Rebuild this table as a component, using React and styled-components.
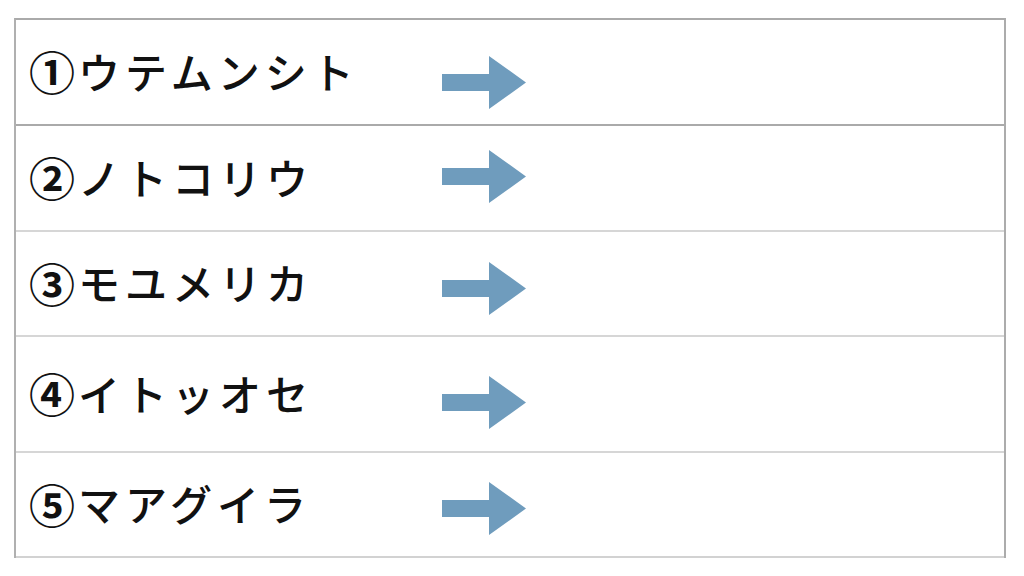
import React from 'react';
import styled, { createGlobalStyle } from 'styled-components';

const GlobalStyle = createGlobalStyle`
  html, body {
    margin: 0;
    padding: 0;
    background: #ffffff;
  }
`;

const rows = [
  { num: '①', label: 'ウテムンシト', height: 106, shift: 10, strong: true },
  { num: '②', label: 'ノトコリウ', height: 106, shift: -2 },
  { num: '③', label: 'モユメリカ', height: 105, shift: 5 },
  { num: '④', label: 'イトッオセ', height: 116, shift: 8 },
  { num: '⑤', label: 'マアグイラ', height: 105, shift: 4 },
];

function Arrow() {
  return (
    <svg width="84" height="53" viewBox="0 0 84 53">
      <polygon points="0,18 47,18 47,0 84,26.5 47,53 47,35 0,35" fill="#6f9cbd" />
    </svg>
  );
}

function App() {
  return (
    <>
      <GlobalStyle />
      <Page>
        <Table>
          {rows.map((row, index) => (
            <Row
              key={index}
              $height={row.height}
              $strong={row.strong}
              $last={index === rows.length - 1}
            >
              <Label>
                <Num>{row.num}</Num>
                {row.label}
              </Label>
              <ArrowCell $shift={row.shift}>
                <Arrow />
              </ArrowCell>
            </Row>
          ))}
        </Table>
      </Page>
    </>
  );
}

const Page = styled.div`
  padding: 18px 0 0 14px;
  width: 1024px;
  height: 576px;
  box-sizing: border-box;
`;

const Table = styled.div`
  width: 992px;
  display: flex;
  flex-direction: column;
  border-top: 2px solid #aaaaaa;
  border-left: 2px solid #b0b0b0;
  border-right: 2px solid #acacac;
  box-sizing: border-box;
`;

const Row = styled.div`
  display: grid;
  grid-template-columns: 426px 1fr;
  align-items: center;
  height: ${(p) => p.$height}px;
  box-sizing: border-box;
  border-bottom: 2px solid ${(p) => (p.$strong ? '#aaaaaa' : p.$last ? '#d2d2d2' : '#d6d6d6')};
`;

const Label = styled.div`
  padding-left: 13px;
  margin-top: -4px;
  font-family: "Noto Sans CJK JP", "Noto Sans", sans-serif;
  font-weight: 500;
  font-size: 42px;
  letter-spacing: 5px;
  color: #111111;
  white-space: nowrap;
  display: flex;
  align-items: center;
`;

const Num = styled.span`
  font-size: 46px;
  letter-spacing: 3px;
  font-weight: 700;
`;

const ArrowCell = styled.div`
  display: flex;
  align-items: center;
  transform: translateY(${(p) => p.$shift}px);
  svg {
    display: block;
  }
`;

export default App;
